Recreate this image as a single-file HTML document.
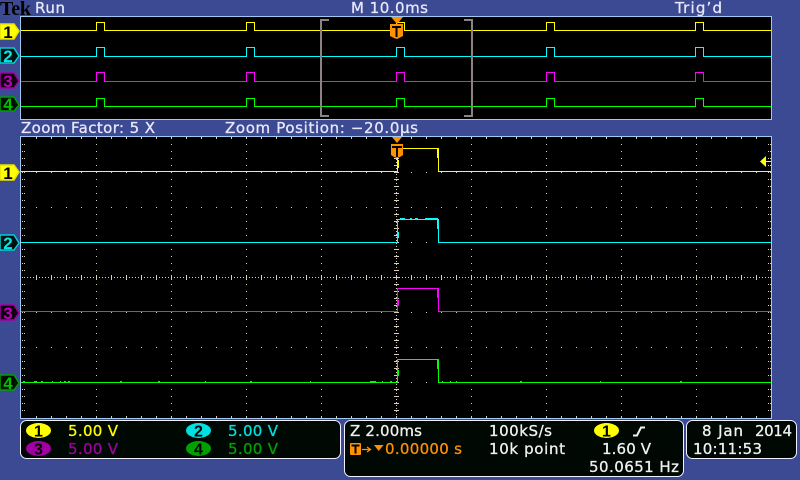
<!DOCTYPE html>
<html><head><meta charset="utf-8"><title>Tek scope</title>
<style>
html,body{margin:0;padding:0;background:#3c4a94;width:800px;height:480px;overflow:hidden}
svg{display:block}
text{font-family:"DejaVu Sans","Liberation Sans",sans-serif;font-size:15px;stroke-width:.3}
.w{fill:#e8e8f8;stroke:#e8e8f8}
.k{fill:#f0f0f0;stroke:#f0f0f0}
.n{font-family:"Liberation Sans",sans-serif;font-weight:bold;font-size:17px;text-anchor:middle;fill:#000;stroke:none}
</style></head><body>
<svg width="800" height="480" viewBox="0 0 800 480" xmlns="http://www.w3.org/2000/svg">
<defs>
<pattern id="rowdots" patternUnits="userSpaceOnUse" width="15" height="35"><rect x="6" y="32" width="1" height="1" fill="#d8d0b8"/></pattern>
<pattern id="coldots" patternUnits="userSpaceOnUse" width="75" height="7"><rect x="21" y="4" width="1" height="1" fill="#d8d0b8"/></pattern>
<pattern id="edgedots" patternUnits="userSpaceOnUse" width="2" height="7"><rect x="0" y="4" width="1" height="1" fill="#d8d0b8"/></pattern>
<pattern id="hd" patternUnits="userSpaceOnUse" width="3" height="1"><rect width="1" height="1" fill="#d8d0b8"/></pattern>
<pattern id="vd" patternUnits="userSpaceOnUse" width="1" height="3"><rect width="1" height="1" fill="#d8d0b8"/></pattern>
<pattern id="hticks" patternUnits="userSpaceOnUse" width="15" height="5" y="275"><rect x="6" width="1" height="5" fill="#d8d0b8"/></pattern>
<pattern id="vticks" patternUnits="userSpaceOnUse" width="5" height="7" x="394"><rect y="4" width="5" height="1" fill="#d8d0b8"/></pattern>
<pattern id="tticks" patternUnits="userSpaceOnUse" width="15" height="2"><rect x="6" width="1" height="2" fill="#d8d0b8"/></pattern>
</defs>

<rect width="800" height="480" fill="#3c4a94"/>

<!-- overview -->
<rect x="20.5" y="16.5" width="751" height="103" fill="#000" stroke="#a0c8f0"/>
<g fill="none" stroke-width="1" shape-rendering="crispEdges">
<path stroke="#ffff00" d="M21 30.5H96.5V22.5H104.5V30.5H246.5V22.5H254.5V30.5H396.5V22.5H404.5V30.5H546.5V22.5H554.5V30.5H695.5V22.5H703.5V30.5H771"/>
<path stroke="#00ffff" d="M21 56.5H96.5V47.5H104.5V56.5H246.5V47.5H254.5V56.5H396.5V47.5H404.5V56.5H546.5V47.5H554.5V56.5H695.5V47.5H703.5V56.5H771"/>
<path stroke="#ff00ff" d="M21 81.5H96.5V72.5H104.5V81.5H246.5V72.5H254.5V81.5H396.5V72.5H404.5V81.5H546.5V72.5H554.5V81.5H695.5V72.5H703.5V81.5H771"/>
<path stroke="#00ff00" d="M21 106.5H96.5V98.5H104.5V106.5H246.5V98.5H254.5V106.5H396.5V98.5H404.5V106.5H546.5V98.5H554.5V106.5H695.5V98.5H703.5V106.5H771"/>
</g>
<g fill="#8c8484" shape-rendering="crispEdges">
<rect x="320" y="19" width="2" height="98"/><rect x="320" y="19" width="9" height="2"/><rect x="320" y="115" width="9" height="2"/>
<rect x="471" y="19" width="2" height="98"/><rect x="464" y="19" width="9" height="2"/><rect x="464" y="115" width="9" height="2"/>
</g>
<polygon points="391,17 403,17 397,24" fill="#ff9000"/>
<polygon points="390,24 403,24 403,36 399,38 397,39 394,38 390,36" fill="#ff9000"/>
<path d="M392 26H401V28H397.5V37H395.5V28H392Z" fill="#000"/>

<!-- main -->
<rect x="20.5" y="136.5" width="751" height="282" fill="#000" stroke="#a0c8f0"/>
<g shape-rendering="crispEdges">
<rect x="22" y="165" width="748" height="250" fill="url(#rowdots)"/>
<rect x="90" y="138" width="620" height="279" fill="url(#coldots)"/>
<rect x="22" y="138" width="3" height="279" fill="url(#edgedots)"/>
<rect x="767" y="138" width="4" height="279" fill="url(#edgedots)"/>
<rect x="22" y="137" width="748" height="2" fill="url(#tticks)"/>
<rect x="22" y="416" width="748" height="2" fill="url(#tticks)"/>
<rect x="22" y="277" width="748" height="1" fill="url(#hd)"/>
<rect x="396" y="138" width="1" height="279" fill="url(#vd)"/>
<rect x="22" y="275" width="748" height="5" fill="url(#hticks)"/>
<rect x="394" y="138" width="5" height="279" fill="url(#vticks)"/>
</g>
<g fill="none" shape-rendering="crispEdges">
<path stroke="#ffff00" d="M21 171.5H397.5V148.5H438.5V171.5H771"/>
<path stroke="#00ffff" d="M21 242.5H397.5V219.5H438.5V242.5H771"/>
<path stroke="#ff00ff" d="M21 311.5H397.5V288.5H438.5V311.5H771"/>
<path stroke="#00ff00" d="M21 382.5H397.5V359.5H438.5V382.5H771"/>
</g>
<g shape-rendering="crispEdges">
<rect x="437" y="148" width="2" height="10" fill="#ffff00"/>
<rect x="437" y="219" width="2" height="10" fill="#00ffff"/>
<rect x="437" y="288" width="2" height="10" fill="#ff00ff"/>
<rect x="437" y="359" width="2" height="10" fill="#00ff00"/>
<rect x="397" y="160" width="2" height="8" fill="#ffff00"/>
<rect x="397" y="232" width="2" height="6" fill="#00ffff"/>
<rect x="397" y="300" width="2" height="6" fill="#ff00ff"/>
<rect x="397" y="370" width="2" height="6" fill="#00ff00"/>
<rect x="400" y="218" width="5" height="1" fill="#00ffff"/><rect x="410" y="218" width="2" height="1" fill="#00ffff"/><rect x="415" y="218" width="3" height="1" fill="#00ffff"/><rect x="425" y="218" width="13" height="1" fill="#00ffff"/>
<g fill="#00ff00">
<rect x="23" y="381" width="2" height="1"/><rect x="34" y="381" width="3" height="1"/><rect x="41" y="381" width="2" height="1"/><rect x="52" y="381" width="1" height="1"/><rect x="60" y="381" width="1" height="1"/><rect x="64" y="381" width="2" height="1"/><rect x="68" y="381" width="2" height="1"/><rect x="120" y="381" width="2" height="1"/><rect x="158" y="381" width="2" height="1"/><rect x="205" y="381" width="1" height="1"/><rect x="250" y="381" width="2" height="1"/><rect x="310" y="381" width="1" height="1"/><rect x="370" y="381" width="6" height="1"/><rect x="382" y="381" width="1" height="1"/><rect x="390" y="381" width="2" height="1"/><rect x="442" y="381" width="1" height="1"/><rect x="450" y="381" width="1" height="1"/><rect x="456" y="381" width="1" height="1"/><rect x="520" y="381" width="2" height="1"/><rect x="600" y="381" width="1" height="1"/><rect x="680" y="381" width="2" height="1"/>
</g>
</g>
<polygon points="392,137 402,137 397,143" fill="#ff9000"/>
<polygon points="391,144 403,144 403,155 400,157 397,158 394,157 391,155" fill="#ff9000"/>
<path d="M392 146H402V148H398V157H396V148H392Z" fill="#000"/>
<polygon points="760,161.5 766,156 766,167" fill="#ffff00"/>
<rect x="766" y="161" width="5" height="1" fill="#ffff00"/>

<!-- channel markers -->
<g stroke-width="1.5">
<polygon points="0,24 14,24 19,31 14,39 0,39" fill="#ffff00" stroke="#e8e000"/>
<polygon points="0,48 14,48 19,56 14,63 0,63" fill="#001010" stroke="#00d0d0"/>
<polygon points="0,73 14,73 19,81 14,88 0,88" fill="#100010" stroke="#a000a0"/>
<polygon points="0,97 14,97 19,105 14,111 0,111" fill="#001000" stroke="#00a000"/>
<polygon points="0,165 14,165 19,172 14,180 0,180" fill="#ffff00" stroke="#e8e000"/>
<polygon points="0,235 14,235 19,243 14,250 0,250" fill="#001010" stroke="#00d0d0"/>
<polygon points="0,305 14,305 19,313 14,320 0,320" fill="#100010" stroke="#a000a0"/>
<polygon points="0,375 14,375 19,383 14,390 0,390" fill="#001000" stroke="#00a000"/>
</g>
<text class="n" x="8" y="38">1</text>
<text class="n" x="8" y="62" style="fill:#00e8e8">2</text>
<text class="n" x="8" y="87" style="fill:#c000c0">3</text>
<text class="n" x="8" y="110" style="fill:#00c000">4</text>
<text class="n" x="8" y="179">1</text>
<text class="n" x="8" y="249" style="fill:#00e8e8">2</text>
<text class="n" x="8" y="319" style="fill:#c000c0">3</text>
<text class="n" x="8" y="389" style="fill:#00c000">4</text>

<!-- header text -->
<text x="0" y="15" textLength="31" style="font-family:'Liberation Serif',serif;font-weight:bold;font-size:20px;fill:#000;stroke:none">Tek</text>
<text class="w" x="35" y="13" textLength="30">Run</text>
<text class="w" x="351" y="13" textLength="77">M 10.0ms</text>
<text class="w" x="675" y="13" textLength="47">Trig’d</text>
<text class="w" x="21" y="133" textLength="134">Zoom Factor: 5 X</text>
<text class="w" x="225" y="133" textLength="193">Zoom Position: −20.0µs</text>

<!-- bottom panels -->
<g fill="#000804" stroke="#f0f0ff" stroke-width="1">
<rect x="20.5" y="420.5" width="320" height="38" rx="6"/>
<rect x="344.5" y="420.5" width="339" height="56" rx="6"/>
<rect x="686.5" y="420.5" width="110" height="38" rx="6"/>
</g>
<ellipse cx="38.5" cy="430.5" rx="12.5" ry="7.5" fill="#ffff00"/>
<ellipse cx="198.5" cy="430.5" rx="12.5" ry="7.5" fill="#00e0e0"/>
<ellipse cx="38.5" cy="448.5" rx="12.5" ry="7.5" fill="#a000a0"/>
<ellipse cx="198.5" cy="448.5" rx="12.5" ry="7.5" fill="#00a000"/>
<ellipse cx="606.5" cy="430.5" rx="12.5" ry="7.5" fill="#ffff00"/>
<g style="font-size:15px">
<text class="n" x="38.5" y="436.5" style="font-size:16px">1</text>
<text class="n" x="198.5" y="436.5" style="font-size:16px">2</text>
<text class="n" x="38.5" y="454.5" style="font-size:16px">3</text>
<text class="n" x="198.5" y="454.5" style="font-size:16px">4</text>
<text class="n" x="606.5" y="436.5" style="font-size:16px">1</text>
</g>

<text x="68" y="436" textLength="50" fill="#ffff00" stroke="#ffff00">5.00 V</text>
<text x="228" y="436" textLength="50" fill="#00e0e0" stroke="#00e0e0">5.00 V</text>
<text x="68" y="454" textLength="50" fill="#a000a0" stroke="#a000a0">5.00 V</text>
<text x="228" y="454" textLength="50" fill="#00a000" stroke="#00a000">5.00 V</text>

<text class="k" x="350" y="436" textLength="72">Z 2.00ms</text>
<text class="k" x="489" y="436" textLength="63">100kS/s</text>
<path d="M633 435.5H637L641 427.5H645" fill="none" stroke="#f0f0f0" stroke-width="2"/>

<rect x="350" y="443" width="11" height="12" rx="1" fill="#ff9000"/>
<path d="M351.5 444.5H359.5V446.5H356.5V453.5H354.5V446.5H351.5Z" fill="#000"/>
<path d="M362 449.5H370M367 447L370.5 449.5L367 452" fill="none" stroke="#ff9000" stroke-width="1.3"/>
<polygon points="374,445 383.5,445 378.7,451" fill="#ff9000"/>
<text x="385" y="454" textLength="77" fill="#ff9000" stroke="#ff9000">0.00000 s</text>
<text class="k" x="489" y="454" textLength="76">10k point</text>
<text class="k" x="602" y="454" textLength="49">1.60 V</text>
<text class="k" x="589" y="472" textLength="90">50.0651 Hz</text>

<text class="k" x="702" y="436" textLength="41">8 Jan</text>
<text class="k" x="755" y="436" textLength="37">2014</text>
<text class="k" x="693" y="454" textLength="69">10:11:53</text>
</svg>
</body></html>
